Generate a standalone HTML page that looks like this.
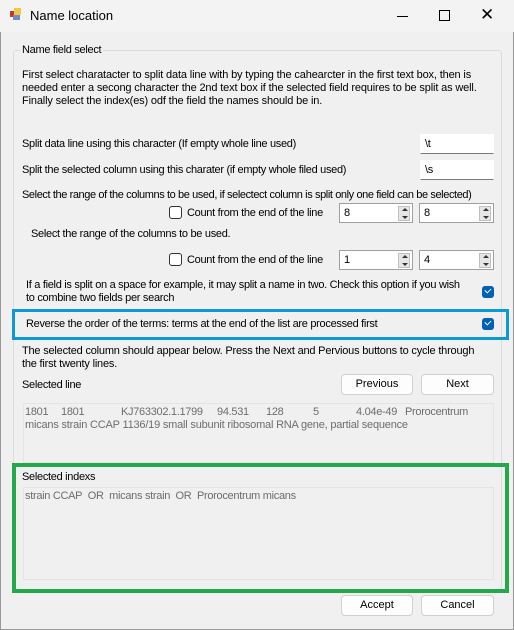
<!DOCTYPE html>
<html><head><style>
*{margin:0;padding:0;box-sizing:border-box}
body{width:514px;height:630px;background:#f0f0f0;font-family:"Liberation Sans",sans-serif;font-size:11px;letter-spacing:-0.3px;color:#000;position:relative;overflow:hidden}
.a{position:absolute;white-space:nowrap}
.tb{position:absolute;background:#fff;border:1px solid #fff;border-bottom:1px solid #7a7a7a}
.num{position:absolute;background:#fff;border:1px solid #a0a0a0;height:20px}
.num span{position:absolute;left:4px;top:3px}
.spin{position:absolute;right:2px;top:2px;width:12px;height:15px;background:#e6e6e6;border:1px solid #c0c0c0}
.spin:before{content:"";position:absolute;left:3px;top:1px;border:3px solid transparent;border-bottom:3px solid #333;border-top:0}
.spin:after{content:"";position:absolute;left:3px;bottom:1px;border:3px solid transparent;border-top:3px solid #333;border-bottom:0}
.cb{position:absolute;width:13px;height:13px;border:1px solid #333;border-radius:3px;background:#fff}
.cbc{position:absolute;width:12px;height:12px;border-radius:3px;background:#005fb8}
.cbc:after{content:"";position:absolute;left:3px;top:2px;width:5px;height:3px;border-left:1px solid #fff;border-bottom:1px solid #fff;transform:rotate(-45deg)}
.btn{position:absolute;background:#fdfdfd;border:1px solid #d0d0d0;border-radius:4px;text-align:center;line-height:19px;height:21px;letter-spacing:0}
.gray{color:#6d6d6d}
</style></head><body>
<div class="a" style="left:0;top:0;width:514px;height:32px;background:#f3f3f3"></div>
<div class="a" style="left:10px;top:11px;width:6px;height:6px;background:#c0392b"></div>
<div class="a" style="left:14px;top:8px;width:7px;height:7px;background:#f4c542"></div>
<div class="a" style="left:13px;top:15px;width:7px;height:5px;background:#6a8fc8"></div>
<div class="a" style="left:30px;top:8px;font-size:13px;letter-spacing:0">Name location</div>
<div class="a" style="left:397px;top:16px;width:11px;height:1px;background:#000"></div>
<div class="a" style="left:439px;top:10px;width:11px;height:11px;border:1px solid #000"></div>
<div class="a" style="left:480px;top:5px;font-size:17px;letter-spacing:0">✕</div>
<div class="a" style="left:0;top:32px;width:1px;height:598px;background:#999"></div>
<div class="a" style="left:513px;top:32px;width:1px;height:598px;background:#999"></div>

<div class="a" style="left:13px;top:50px;width:489px;height:540px;border:1px solid #dcdcdc;border-radius:3px"></div>
<div class="a" style="left:20px;top:44px;background:#f0f0f0;padding:0 2px">Name field select</div>
<div class="a" style="left:22px;top:69px;line-height:13px;letter-spacing:-0.15px">First select charatacter to split data line with by typing the cahearcter in the first text box, then is<br>needed enter a secong character the 2nd text box if the selected field requires to be split as well.<br>Finally select the index(es) odf the field the names should be in.</div>

<div class="a" style="left:22px;top:138px">Split data line using this character (If empty whole line used)</div>
<div class="tb" style="left:420px;top:134px;width:74px;height:20px"><span class="a" style="left:4px;top:3px">\t</span></div>
<div class="a" style="left:22px;top:164px">Split the selected column using this charater (if empty whole filed used)</div>
<div class="tb" style="left:420px;top:160px;width:74px;height:20px"><span class="a" style="left:4px;top:3px">\s</span></div>
<div class="a" style="left:22px;top:189px;letter-spacing:-0.4px">Select the range of the columns to be used, if selectect column is split only one field can be selected)</div>

<div class="cb" style="left:169px;top:206px"></div>
<div class="a" style="left:187px;top:207px">Count from the end of the line</div>
<div class="num" style="left:339px;top:203px;width:74px"><span>8</span><div class="spin"></div></div>
<div class="num" style="left:419px;top:203px;width:75px"><span>8</span><div class="spin"></div></div>
<div class="a" style="left:31px;top:228px">Select the range of the columns to be used.</div>
<div class="cb" style="left:169px;top:253px"></div>
<div class="a" style="left:187px;top:254px">Count from the end of the line</div>
<div class="num" style="left:339px;top:250px;width:74px"><span>1</span><div class="spin"></div></div>
<div class="num" style="left:419px;top:250px;width:75px"><span>4</span><div class="spin"></div></div>

<div class="a" style="left:26px;top:279px;line-height:13px">If a field is split on a space for example, it may split a name in two. Check this option if you wish<br>to combine two fields per search</div>
<div class="cbc" style="left:482px;top:286px"></div>

<div class="a" style="left:12px;top:309px;width:497px;height:31px;border:3px solid #0c9ad7"></div>
<div class="a" style="left:26px;top:318px">Reverse the order of the terms: terms at the end of the list are processed first</div>
<div class="cbc" style="left:482px;top:318px"></div>

<div class="a" style="left:22px;top:345px;line-height:13px;letter-spacing:-0.2px">The selected column should appear below. Press the Next and Pervious buttons to cycle through<br>the first twenty lines.</div>
<div class="a" style="left:22px;top:379px">Selected line</div>
<div class="btn" style="left:341px;top:374px;width:72px">Previous</div>
<div class="btn" style="left:421px;top:374px;width:73px">Next</div>
<div class="a" style="left:23px;top:403px;width:471px;height:60px;border:1px solid #e4e4e4"></div>
<div class="a gray" style="left:25px;top:406px">1801</div>
<div class="a gray" style="left:61px;top:406px">1801</div>
<div class="a gray" style="left:121px;top:406px">KJ763302.1.1799</div>
<div class="a gray" style="left:217px;top:406px">94.531</div>
<div class="a gray" style="left:266px;top:406px">128</div>
<div class="a gray" style="left:313px;top:406px">5</div>
<div class="a gray" style="left:356px;top:406px">4.04e-49</div>
<div class="a gray" style="left:405px;top:406px">Prorocentrum</div>
<div class="a gray" style="left:25px;top:419px;letter-spacing:-0.2px">micans strain CCAP 1136/19 small subunit ribosomal RNA gene, partial sequence</div>

<div class="a" style="left:12px;top:463px;width:497px;height:130px;border:4px solid #22aa4a"></div>
<div class="a" style="left:22px;top:471px">Selected indexs</div>
<div class="a" style="left:23px;top:487px;width:471px;height:93px;border:1px solid #e4e4e4"></div>
<div class="a gray" style="left:25px;top:490px">strain CCAP&nbsp; OR&nbsp; micans strain&nbsp; OR&nbsp; Prorocentrum micans</div>

<div class="btn" style="left:341px;top:595px;width:72px">Accept</div>
<div class="btn" style="left:421px;top:595px;width:73px">Cancel</div>
<div class="a" style="left:0;top:629px;width:514px;height:1px;background:#999"></div>
</body></html>
